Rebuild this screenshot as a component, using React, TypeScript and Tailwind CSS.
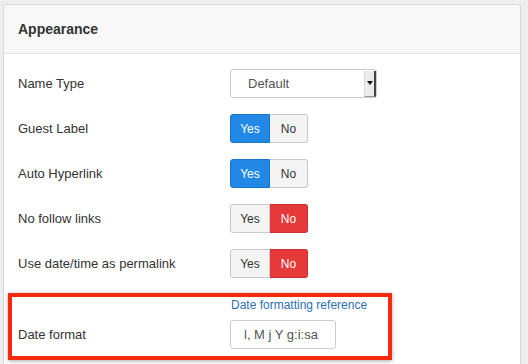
import React from 'react';

type Toggle = { label: string; value: boolean; tone: 'blue' | 'red' };

const toggles: Toggle[] = [
  { label: 'Guest Label', value: true, tone: 'blue' },
  { label: 'Auto Hyperlink', value: true, tone: 'blue' },
  { label: 'No follow links', value: false, tone: 'red' },
  { label: 'Use date/time as permalink', value: false, tone: 'red' },
];

function YesNo({ value }: { value: boolean }) {
  const off = 'bg-[#f4f4f4] border-[#c8c8c8] text-[#333]';
  return (
    <div className="flex h-[29px] text-[12px]">
      <div
        className={`w-[40px] flex items-center justify-center border rounded-l-[3px] ${
          value ? 'bg-[#2288e6] border-[#1a74cc] text-white' : off
        }`}
      >
        Yes
      </div>
      <div
        className={`w-[38px] flex items-center justify-center border border-l-0 rounded-r-[3px] ${
          value ? off : 'bg-[#e63a3a] border-[#cf2e2e] text-white'
        }`}
      >
        No
      </div>
    </div>
  );
}

export default function App() {
  return (
    <div
      className="min-h-screen bg-[#eeeeee] pt-[4px] pl-[3px]"
      style={{ fontFamily: '"Liberation Sans", Arial, sans-serif' }}
    >
      <div className="w-[518px] min-h-[360px] bg-white border border-b-0 border-[#d6d6d6] rounded-t-[3px]">
        {/* Header */}
        <div className="h-[49px] bg-[#f8f8f8] border-b border-[#e2e2e2] rounded-t-[3px] px-[14px] flex items-center">
          <h2 className="text-[14px] font-bold text-[#333]">Appearance</h2>
        </div>

        {/* Body */}
        <div className="pt-[7px]">
          <div className="h-[45px] flex items-center pl-[14px]">
            <div className="w-[212px] text-[13px] text-[#333]">Name Type</div>
            <div className="w-[147px] h-[29px] border border-[#ccc] rounded-[3px] bg-white flex items-center">
              <span className="flex-1 pl-[17px] text-[13px] text-[#555]">Default</span>
              <div className="w-[12px] h-[26px] bg-[#ececec] border-l border-[#d8d8d8] border-r-2 border-r-[#444] border-b border-b-[#999] flex items-center justify-center">
                <svg width="6" height="4" viewBox="0 0 6 4">
                  <path d="M0 0 L6 0 L3 4 Z" fill="#111" />
                </svg>
              </div>
            </div>
          </div>

          {toggles.map((t) => (
            <div key={t.label} className="h-[45px] flex items-center pl-[14px]">
              <div className="w-[212px] text-[13px] text-[#333]">{t.label}</div>
              <YesNo value={t.value} />
            </div>
          ))}

          {/* Highlighted date section */}
          <div className="mt-[7px] ml-[4px] w-[384px] border-4 border-[#f52a0e] shadow-[0_1px_4px_rgba(0,0,0,0.35)] pl-[6px] pb-[7px]">
            <div className="h-[15px] flex items-center pl-[213px]">
              <a className="text-[12px] text-[#2f6fb5]">Date formatting reference</a>
            </div>
            <div className="mt-[8px] flex items-center">
              <div className="w-[212px] text-[13px] text-[#333]">Date format</div>
              <div className="w-[106px] h-[29px] border border-[#ccc] rounded-[3px] bg-white flex items-center pl-[13px] text-[13px] text-[#555]">
                l, M j Y g:i:sa
              </div>
            </div>
          </div>
        </div>
      </div>
    </div>
  );
}
